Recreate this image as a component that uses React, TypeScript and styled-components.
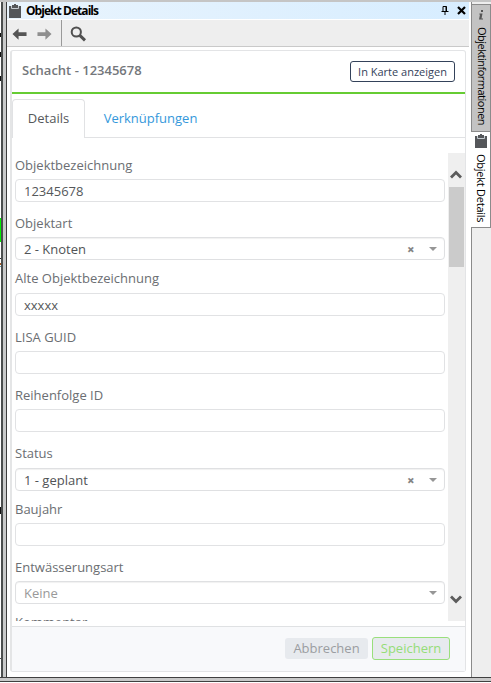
import React from "react";
import styled, { createGlobalStyle } from "styled-components";

const Global = createGlobalStyle`
  * { box-sizing: border-box; }
  html, body { margin: 0; height: 683px; overflow: hidden; background: #fff; }
  body { font-family: "Open Sans", "Noto Sans", sans-serif; }
  button, input { font: inherit; margin: 0; }
`;

const Window = styled.div`
  width: 491px;
  height: 683px;
  display: flex;
  flex-direction: column;
  overflow: hidden;
  border-top: 2px solid #c5c5c5;
`;
const Main = styled.div`
  height: 675px;
  display: flex;
`;
const MapEdge = styled.div`
  width: 1px;
  display: flex;
  flex-direction: column;
  background: #fff;
`;
const MapMark = styled.i<{ $gap: number; $h: number; $c: string }>`
  margin-top: ${(p) => p.$gap}px;
  height: ${(p) => p.$h}px;
  flex: none;
  background: ${(p) => p.$c};
`;
const Splitter = styled.div`
  width: 6px;
  flex: none;
  background: #c9caca;
  border-left: 2px solid #4b4e4e;
  border-right: 1px solid #3d3d3d;
`;
const Dock = styled.section`
  width: 464px;
  flex: none;
  display: flex;
  flex-direction: column;
  background: #fff;
`;
const TitleBar = styled.header`
  height: 17px;
  margin-right: 2px;
  padding-left: 2px;
  display: flex;
  align-items: center;
  background: linear-gradient(90deg, #e9f4fd 0, #d7edff 100%);
`;
const Title = styled.h1`
  margin: 0 auto 0 5px;
  font-size: 12px;
  line-height: 16px;
  font-weight: 700;
  letter-spacing: -0.95px;
  color: #000;
`;
const TitleIcons = styled.div`
  display: flex;
  gap: 8px;
  padding-right: 3px;
`;
const Toolbar = styled.div`
  height: 27px;
  margin: 1px 2px 0 0;
  display: flex;
  background: #eee;
  border-bottom: 1px solid #c9c9c9;
  align-items: center;
`;
const NavIcons = styled.div`
  width: 55px;
  height: 26px;
  padding: 1px 0 0 5px;
  display: flex;
  align-items: center;
  gap: 10px;
  border-right: 1px solid #999;
`;
const SearchSlot = styled.div`
  padding: 2px 0 0 8px;
  display: flex;
`;
const Card = styled.div`
  width: 456px;
  height: 622px;
  margin: 3px 0 0 3px;
  border: 1px solid #e3e4e6;
  border-left: 2px solid #e4e5e6;
  border-radius: 3px;
  display: flex;
  flex-direction: column;
`;
const CardHead = styled.div`
  height: 43px;
  flex: none;
  padding: 0 10px;
  display: flex;
  justify-content: space-between;
  align-items: center;
  border-bottom: 2px solid #66cc33;
`;
const Heading = styled.h2`
  margin: 0;
  padding-bottom: 3px;
  font-size: 13px;
  line-height: 18px;
  font-weight: 600;
  color: #74777b;
`;
const MapButton = styled.button`
  width: 105px;
  height: 21px;
  padding: 0;
  border: 1px solid #34425a;
  border-radius: 3px;
  background: #fff;
  color: #34425a;
  font-size: 11px;
  line-height: 19px;
  white-space: nowrap;
`;
const Tabs = styled.nav`
  height: 44px;
  flex: none;
  padding-top: 5px;
  display: flex;
  border-bottom: 1px solid #e1e2e4;
`;
const Tab = styled.div<{ $active?: boolean }>`
  height: 39px;
  width: ${(p) => (p.$active ? 73 : 131)}px;
  border: 1px solid ${(p) => (p.$active ? "#e1e2e4" : "transparent")};
  border-bottom: 0;
  border-radius: 4px 4px 0 0;
  background: ${(p) => (p.$active ? "#fff" : "transparent")};
  color: ${(p) => (p.$active ? "#55585a" : "#3498db")};
  font-size: 13px;
  line-height: 37px;
  text-align: center;
`;
const ScrollRegion = styled.div`
  height: 483px;
  flex: none;
  overflow: hidden;
  display: flex;
  justify-content: space-between;
`;
const Form = styled.form`
  width: 433px;
  padding: 18px 0 0 3px;
  display: flex;
  flex-direction: column;
`;
const Field = styled.div<{ $gap: number }>`
  flex: none;
  margin-bottom: ${(p) => p.$gap}px;
`;
const Label = styled.label<{ $space: number }>`
  display: block;
  height: 18px;
  margin-bottom: ${(p) => p.$space}px;
  font-size: 13px;
  line-height: 18px;
  color: #6b6e72;
`;
const TextInput = styled.input`
  display: block;
  width: 430px;
  height: 23px;
  padding: 1px 8px 0;
  border: 1px solid #e1e2e4;
  border-radius: 4px;
  background: #fff;
  color: #55585a;
  font-size: 13px;
  outline: none;
`;
const SelectBox = styled.div<{ $muted?: boolean }>`
  width: 430px;
  height: 23px;
  padding: 1px 7px 0 8px;
  border: 1px solid #dfe0e2;
  border-radius: 4px;
  box-shadow: inset 0 1px 1px rgba(0, 0, 0, 0.06);
  display: flex;
  align-items: center;
  color: ${(p) => (p.$muted ? "#999" : "#505356")};
  font-size: 13px;
  line-height: 20px;
`;
const SelectValue = styled.span`
  margin-right: auto;
`;
const Clear = styled.span`
  width: 8px;
  margin-right: 14px;
  color: #858585;
  font-size: 13px;
  font-weight: 800;
`;
const Scrollbar = styled.div`
  width: 17px;
  height: 468px;
  margin-top: 15px;
  padding-right: 1px;
  background: #efefef;
  display: flex;
  flex-direction: column;
  align-items: center;
`;
const Thumb = styled.div`
  width: 15px;
  height: 80px;
  margin-bottom: auto;
  background: #cbcbcb;
`;
const ArrowSlot = styled.div<{ $h: number; $top: number }>`
  height: ${(p) => p.$h}px;
  padding-top: ${(p) => p.$top}px;
`;
const Footer = styled.footer`
  height: 45px;
  margin-top: 5px;
  padding: 0 15px 2px 0;
  display: flex;
  align-items: center;
  justify-content: flex-end;
  gap: 4px;
  background: #f8f9fb;
  border-top: 1px solid #dfe1e3;
`;
const Action = styled.button<{ $save?: boolean }>`
  width: ${(p) => (p.$save ? 78 : 83)}px;
  height: ${(p) => (p.$save ? 23 : 21)}px;
  padding: 0;
  border: ${(p) => (p.$save ? "1px solid #99df7c" : "0")};
  border-radius: 3px;
  background: #e7eaee;
  color: ${(p) => (p.$save ? "#95dd77" : "#9b9da1")};
  font-size: 13px;
  line-height: 20px;
`;
const SideRail = styled.aside`
  width: 20px;
  flex: none;
  background: #eee;
  border-left: 1px solid #8a8a8a;
  display: flex;
  flex-direction: column;
`;
const SideTab = styled.div<{ $active?: boolean }>`
  width: ${(p) => (p.$active ? 20 : 19)}px;
  height: ${(p) => (p.$active ? 96 : 128)}px;
  flex: none;
  margin: ${(p) => (p.$active ? "0 0 0 -1px" : "2px 0 0")};
  padding-top: ${(p) => (p.$active ? 2 : 5)}px;
  border: 1px solid #8b8b8b;
  border-left: 0;
  border-top-width: ${(p) => (p.$active ? 0 : 1)}px;
  background: ${(p) => (p.$active ? "#fff" : "#c3c3c3")};
  display: flex;
  flex-direction: column;
  align-items: center;
  gap: ${(p) => (p.$active ? 6 : 7)}px;
`;
const SideText = styled.span<{ $ls: number }>`
  writing-mode: vertical-rl;
  font-family: "Open Sans", sans-serif;
  font-size: 11px;
  line-height: 14px;
  letter-spacing: ${(p) => p.$ls}px;
  margin-left: 1px;
  white-space: nowrap;
  color: #000;
`;
const BottomBar = styled.div`
  height: 5px;
  flex: none;
  background: #c9c9c9;
  border-top: 1px solid #404040;
  border-bottom: 1px solid #404040;
`;

const Clipboard = ({ w = 12, h = 14 }: { w?: number; h?: number }) => (
  <svg width={w} height={h} viewBox="0 0 12 14">
    <path d="M0 2h3V1h2V0h2v1h2v1h3v12H0z" fill="#55575a" />
    <path d="M2.5 2v2.5h7V2" fill="none" stroke="#c5cbd0" strokeWidth="1" />
  </svg>
);
const NavArrow = ({ color, flip }: { color: string; flip?: boolean }) => (
  <svg width="15" height="12" viewBox="0 0 16 12">
    <path d="M.5 6 7 0v4h8.5v4H7v4z" fill={color} transform={flip ? "matrix(-1 0 0 1 16 0)" : undefined} />
  </svg>
);
const Caret = () => (
  <svg width="8" height="4" viewBox="0 0 8 4">
    <path d="M0 0h8L4 4z" fill="#969696" />
  </svg>
);
const Chevron = ({ down }: { down?: boolean }) => (
  <svg width="12" height="9" viewBox="0 0 12 9" display="block">
    <path d={down ? "M1 1.5l5 5 5-5" : "M1 7.5l5-5 5 5"} fill="none" stroke="#5c5c5c" strokeWidth="2.8" />
  </svg>
);

type FieldSpec = { label: string; value: string; kind: "text" | "select"; gap: number; space?: number; muted?: boolean };
const fields: FieldSpec[] = [
  { label: "Objektbezeichnung", value: "12345678", kind: "text", gap: 12 },
  { label: "Objektart", value: "2 - Knoten", kind: "select", gap: 9 },
  { label: "Alte Objektbezeichnung", value: "xxxxx", kind: "text", gap: 12, space: 6 },
  { label: "LISA GUID", value: "", kind: "text", gap: 12 },
  { label: "Reihenfolge ID", value: "", kind: "text", gap: 12 },
  { label: "Status", value: "1 - geplant", kind: "select", gap: 9, space: 6 },
  { label: "Baujahr", value: "", kind: "text", gap: 12 },
  { label: "Entwässerungsart", value: "Keine", kind: "select", gap: 9, muted: true },
  { label: "Kommentar", value: "", kind: "text", gap: 0 },
];

export default function App() {
  return (
    <>
      <Global />
      <Window>
        <Main>
          <MapEdge>
            <MapMark $gap={31} $h={4} $c="#111" />
            <MapMark $gap={15} $h={5} $c="#111" />
            <MapMark $gap={19} $h={5} $c="#111" />
            <MapMark $gap={137} $h={24} $c="#00f000" />
            <MapMark $gap={16} $h={1} $c="#333" />
            <MapMark $gap={4} $h={2} $c="#a55a25" />
            <MapMark $gap={1} $h={1} $c="#69a" />
            <MapMark $gap={240} $h={7} $c="#111" />
            <MapMark $gap={144} $h={1} $c="#555" />
          </MapEdge>
          <Splitter />
          <Dock>
            <TitleBar>
              <Clipboard />
              <Title>Objekt Details</Title>
              <TitleIcons>
                <svg width="8" height="9" viewBox="0 0 8 9">
                  <path d="M2 5V.5h3.5V5M5 .5V5M.5 5.5h7M4 6v3" fill="none" stroke="#000" />
                </svg>
                <svg width="9" height="9" viewBox="0 0 9 9">
                  <path d="M1 1l7 7M8 1L1 8" stroke="#000" strokeWidth="2.2" />
                </svg>
              </TitleIcons>
            </TitleBar>
            <Toolbar>
              <NavIcons>
                <NavArrow color="#555" />
                <NavArrow color="#8f8f8f" flip />
              </NavIcons>
              <SearchSlot>
                <svg width="17" height="17" viewBox="0 0 17 17">
                  <circle cx="6.3" cy="6" r="4.6" fill="none" stroke="#505050" strokeWidth="2" />
                  <path d="M9.8 9.3l5.2 5" stroke="#505050" strokeWidth="3" />
                </svg>
              </SearchSlot>
            </Toolbar>
            <Card>
              <CardHead>
                <Heading>Schacht - 12345678</Heading>
                <MapButton>In Karte anzeigen</MapButton>
              </CardHead>
              <Tabs>
                <Tab $active>Details</Tab>
                <Tab>Verknüpfungen</Tab>
              </Tabs>
              <ScrollRegion>
                <Form>
                  {fields.map((f) => (
                    <Field key={f.label} $gap={f.gap}>
                      <Label $space={f.space ?? 5}>{f.label}</Label>
                      {f.kind === "text" ? (
                        <TextInput defaultValue={f.value} />
                      ) : (
                        <SelectBox $muted={f.muted}>
                          <SelectValue>{f.value}</SelectValue>
                          {!f.muted && <Clear>×</Clear>}
                          <Caret />
                        </SelectBox>
                      )}
                    </Field>
                  ))}
                </Form>
                <Scrollbar>
                  <ArrowSlot $h={34} $top={17}><Chevron /></ArrowSlot>
                  <Thumb />
                  <ArrowSlot $h={27} $top={1}><Chevron down /></ArrowSlot>
                </Scrollbar>
              </ScrollRegion>
              <Footer>
                <Action>Abbrechen</Action>
                <Action $save>Speichern</Action>
              </Footer>
            </Card>
          </Dock>
          <SideRail>
            <SideTab>
              <svg width="6" height="10" viewBox="0 0 6 10">
                <path d="M3 0h2v2H3zM1.5 3.5h3L3.5 8.5H5v1H1L2 4.5h-.8z" fill="#555" />
              </svg>
              <SideText $ls={-0.5}>Objektinformationen</SideText>
            </SideTab>
            <SideTab $active>
              <Clipboard w={12} h={14} />
              <SideText $ls={-0.25}>Objekt Details</SideText>
            </SideTab>
          </SideRail>
        </Main>
        <BottomBar />
      </Window>
    </>
  );
}
